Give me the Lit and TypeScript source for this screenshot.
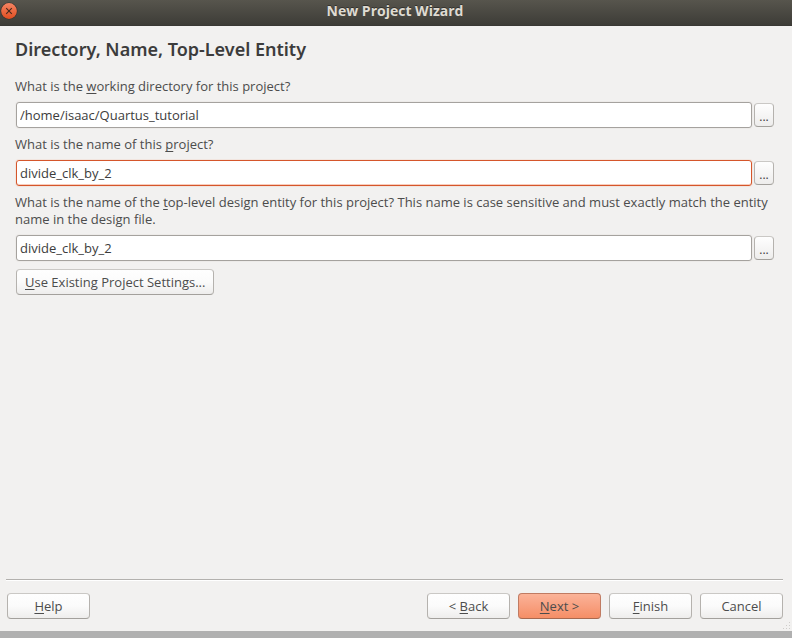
import { LitElement, html, css } from "lit";
import { customElement, property } from "lit/decorators.js";

@customElement("path-field")
class PathField extends LitElement {
  @property() before = "";
  @property() key = "";
  @property() after = "";
  @property() value = "";
  @property({ type: Boolean, reflect: true }) active = false;

  static styles = css`
    :host {
      display: block;
      font: 13px/17px "Open Sans", "Noto Sans", sans-serif;
      color: #4c4c4c;
    }
    .label {
      display: block;
      padding-bottom: 7px;
    }
    .key {
      text-decoration: underline;
      text-decoration-thickness: 1px;
      text-underline-offset: 2px;
      text-decoration-skip-ink: none;
    }
    .row {
      display: flex;
      align-items: center;
      gap: 2px;
      padding: 0 3px 0 1px;
    }
    .input {
      flex: 1;
      min-width: 0;
      box-sizing: border-box;
      height: 26px;
      padding: 0 3px;
      border: 1px solid #a5a29e;
      border-radius: 3px;
      background: #fff;
      box-shadow: 0 0 0 1px #edebe9;
      font: inherit;
      color: #3c3c3c;
      outline: none;
    }
    :host([active]) .input {
      border-color: #d5562b;
      box-shadow: inset 0 -1px 0 #f8cdbd, 0 0 0 1px #f1e5df;
    }
    .browse {
      box-sizing: border-box;
      width: 20px;
      height: 24px;
      padding: 3px 0 0;
      border: 1px solid #b5b2ae;
      border-top-color: #cac8c5;
      border-bottom-color: #a3a09c;
      border-radius: 4px;
      background: linear-gradient(#fefefe, #eeedec);
      font: inherit;
      font-size: 12px;
      line-height: 16px;
      color: #3c3c3c;
    }
  `;

  render() {
    return html`
      <label class="label" for="path">${this.before}<span class="key">${this.key}</span>${this.after}</label>
      <div class="row">
        <input class="input" id="path" type="text" spellcheck="false" .value=${this.value} />
        <button class="browse" type="button" aria-label="Browse">...</button>
      </div>
    `;
  }
}

@customElement("app-root")
class AppRoot extends LitElement {
  static styles = css`
    :host {
      display: flex;
      flex-direction: column;
      box-sizing: border-box;
      min-height: 100vh;
      border-bottom: 7px solid #b0b0b0;
      background: #f2f1f0;
      font: 13px/17px "Open Sans", "Noto Sans", sans-serif;
      color: #4c4c4c;
    }
    .titlebar {
      display: grid;
      grid-template-columns: 18px 1fr 20px;
      align-items: center;
      box-sizing: border-box;
      height: 26px;
      padding-bottom: 4px;
      background: linear-gradient(#57554d, #3d3c37);
      border-bottom: 1px solid #393834;
    }
    .close {
      width: 18px;
      height: 18px;
      padding: 0;
      border: 0;
      background: none;
    }
    .close svg {
      display: block;
    }
    .caption {
      margin: 0;
      font-size: 14px;
      line-height: 20px;
      font-weight: 700;
      text-align: center;
      color: #dfdbd2;
      text-shadow: 0 -1px 0 #33322e;
    }
    .page {
      flex: 1;
      padding: 11px 15px 0;
    }
    .heading {
      margin: 0 0 16px;
      font-family: "Noto Sans", sans-serif;
      font-size: 18px;
      line-height: 25px;
      font-weight: 600;
      color: #3c3c3c;
    }
    .fields {
      display: flex;
      flex-direction: column;
      gap: 8px;
    }
    .button {
      box-sizing: border-box;
      width: 83px;
      height: 26px;
      padding: 0;
      border: 1px solid #b5b2ae;
      border-top-color: #cac8c5;
      border-bottom-color: #a3a09c;
      border-radius: 4px;
      background: linear-gradient(#fefefe, #fbfbfb 50%, #eeedec);
      font: inherit;
      color: #4c4c4c;
    }
    .button.wide {
      width: auto;
      margin: 8px 0 0 1px;
      padding: 0 8px;
    }
    .button.primary {
      border-color: #c07b62;
      border-bottom-color: #a8694f;
      background: linear-gradient(#fbb398, #f8a080 50%, #f58e66);
    }
    .key {
      text-decoration: underline;
      text-decoration-thickness: 1px;
      text-underline-offset: 2px;
      text-decoration-skip-ink: none;
    }
    .footer {
      display: flex;
      gap: 8px;
      margin: 0 9px 0 6px;
      padding: 13px 0 12px 1px;
      border-top: 1px solid #b3b1ae;
      box-shadow: inset 0 1px 0 #fff;
    }
    .help {
      margin-right: auto;
    }
    .grip {
      position: absolute;
      right: 1px;
      bottom: 1px;
    }
    .body {
      position: relative;
      flex: 1;
      display: flex;
      flex-direction: column;
    }
  `;

  render() {
    return html`
      <header class="titlebar">
        <button class="close" type="button" aria-label="Close">
          <svg width="18" height="18" viewBox="0 0 18 18">
            <defs>
              <linearGradient id="orb" x1="0" y1="0" x2="0" y2="1">
                <stop offset="0" stop-color="#f58463" />
                <stop offset="1" stop-color="#e04d20" />
              </linearGradient>
            </defs>
            <circle cx="9" cy="9" r="8.5" fill="#33322e" />
            <circle cx="9" cy="9" r="7.9" fill="url(#orb)" />
            <path d="M6.2 6.2l5.6 5.6M11.8 6.2l-5.6 5.6" stroke="#45281c" stroke-width="1.1" />
          </svg>
        </button>
        <h1 class="caption">New Project Wizard</h1>
      </header>
      <main class="body">
        <div class="page">
          <h2 class="heading">Directory, Name, Top-Level Entity</h2>
          <div class="fields">
            <path-field
              before="What is the "
              key="w"
              after="orking directory for this project?"
              value="/home/isaac/Quartus_tutorial"
            ></path-field>
            <path-field
              active
              before="What is the name of this "
              key="p"
              after="roject?"
              value="divide_clk_by_2"
            ></path-field>
            <path-field
              before="What is the name of the "
              key="t"
              after="op-level design entity for this project? This name is case sensitive and must exactly match the entity name in the design file."
              value="divide_clk_by_2"
            ></path-field>
          </div>
          <button class="button wide" type="button"><span class="key">U</span>se Existing Project Settings...</button>
        </div>
        <footer class="footer">
          <button class="button help" type="button"><span class="key">H</span>elp</button>
          <button class="button" type="button">&lt; <span class="key">B</span>ack</button>
          <button class="button primary" type="button"><span class="key">N</span>ext &gt;</button>
          <button class="button" type="button"><span class="key">F</span>inish</button>
          <button class="button" type="button">Cancel</button>
        </footer>
        <svg class="grip" width="9" height="9" viewBox="0 0 9 9" fill="#cfcdca">
          <path d="M7 1h1v1h-1zM4 4h1v1h-1zM7 4h1v1h-1zM1 7h1v1h-1zM4 7h1v1h-1zM7 7h1v1h-1z" />
        </svg>
      </main>
    `;
  }
}
